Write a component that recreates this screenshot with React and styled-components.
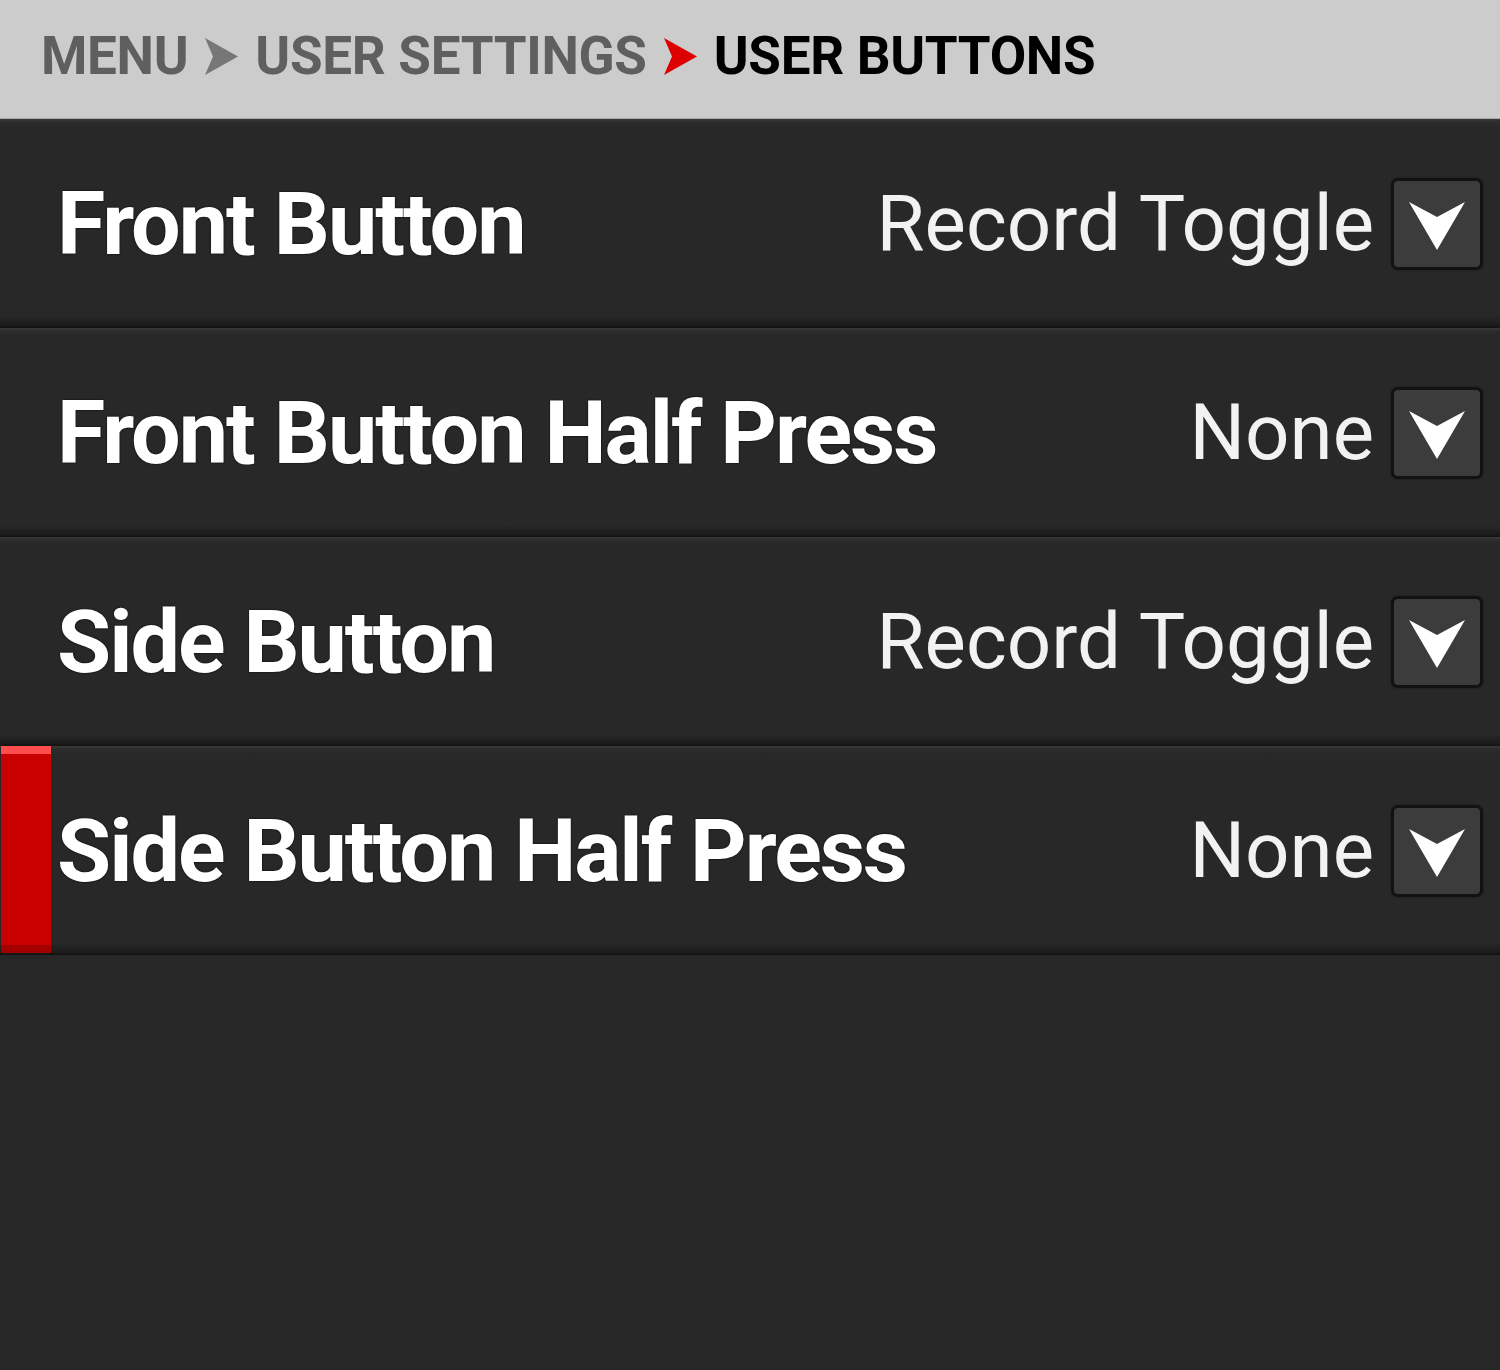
import styled, { createGlobalStyle } from 'styled-components';

const GlobalStyle = createGlobalStyle`
    html, body {
        margin: 0;
        padding: 0;
        background: #272727;
    }
    body {
        font-family: Roboto, "Liberation Sans", sans-serif;
        width: 1500px;
        height: 1370px;
        overflow: hidden;
    }
`

const crumbs = [
    { text: 'MENU', color: '#5f5f5f' },
    { text: 'USER SETTINGS', color: '#5f5f5f' },
    { text: 'USER BUTTONS', color: '#000000' },
]

const settings = [
    { id: 1, label: 'Front Button', value: 'Record Toggle' },
    { id: 2, label: 'Front Button Half Press', value: 'None' },
    { id: 3, label: 'Side Button', value: 'Record Toggle' },
    { id: 4, label: 'Side Button Half Press', value: 'None', selected: true },
]

const Chevron = ({ color }) => (
    <svg width="33" height="37" viewBox="0 0 33 37">
        <polygon points="0,0 33,18.5 0,37 8,18.5" fill={color} />
    </svg>
)

const DownArrow = () => (
    <svg width="56" height="48" viewBox="0 0 56 48">
        <polygon points="0,0 28,15 56,0 28,48" fill="#ffffff" />
    </svg>
)

const App = () => {
    return (
        <Screen>
            <GlobalStyle />
            <Breadcrumb>
                {crumbs.map((c, i) => (
                    <Crumb key={c.text}>
                        {i > 0 && (
                            <Chevron color={i === crumbs.length - 1 ? '#dd0000' : '#777777'} />
                        )}
                        <CrumbText $color={c.color}>{c.text}</CrumbText>
                    </Crumb>
                ))}
            </Breadcrumb>
            <List>
                {settings.map(({ id, label, value, selected }) => (
                    <Row key={id}>
                        {selected && <Marker />}
                        <Label>{label}</Label>
                        <Value>{value}</Value>
                        <DropButton>
                            <DownArrow />
                        </DropButton>
                    </Row>
                ))}
            </List>
        </Screen>
    )
}

const Screen = styled.div`
    width: 1500px;
    height: 1370px;
    background: #272727;
`

const Breadcrumb = styled.header`
    height: 119px;
    box-sizing: border-box;
    background: #cccccc;
    border-bottom: 1px solid #a8a8a8;
    display: flex;
    align-items: center;
    padding-left: 41px;
    padding-bottom: 6px;
`

const Crumb = styled.div`
    display: flex;
    align-items: center;
    gap: 17px;
    margin-right: 17px;
    svg {
        margin-top: 1px;
    }
`

const CrumbText = styled.span`
    font-family: Roboto, "Liberation Sans", sans-serif;
    font-weight: 700;
    font-size: 53px;
    line-height: 1;
    color: ${({ $color }) => $color};
    letter-spacing: -0.3px;
`

const List = styled.div`
    display: flex;
    flex-direction: column;
`

const Row = styled.div`
    position: relative;
    height: 209px;
    box-sizing: border-box;
    display: flex;
    align-items: center;
    padding: 0 17px 0 57px;
    background: linear-gradient(
        to bottom,
        #3a3a3a 0px,
        #2c2c2c 3px,
        #282828 8px,
        #282828 calc(100% - 12px),
        #1c1c1c calc(100% - 3px),
        #111111 100%
    );
`

const Marker = styled.div`
    position: absolute;
    left: 1px;
    top: 0;
    bottom: 2px;
    width: 50px;
    background: linear-gradient(
        to bottom,
        #ff4c4c 0px,
        #ff4c4c 8px,
        #c80000 8px,
        #c80000 calc(100% - 8px),
        #a50000 calc(100% - 8px)
    );
`

const Label = styled.div`
    position: relative;
    flex: 1;
    font-family: Roboto, "Liberation Sans", sans-serif;
    font-weight: 700;
    font-size: 88px;
    color: #ffffff;
    text-shadow: 0 0 2px #000;
    white-space: nowrap;
    letter-spacing: -2px;
`

const Value = styled.div`
    font-family: Roboto, "Liberation Sans", sans-serif;
    font-weight: 400;
    font-size: 78px;
    color: #f2f2f2;
    white-space: nowrap;
    margin-right: 17px;
`

const DropButton = styled.div`
    width: 92px;
    height: 92px;
    box-sizing: border-box;
    border: 3px solid #121212;
    border-radius: 7px;
    background: #3c3c3c;
    display: flex;
    align-items: center;
    justify-content: center;
    padding-top: 4px;
    box-shadow: 0 0 2px rgba(0, 0, 0, 0.5);
`

export default App
